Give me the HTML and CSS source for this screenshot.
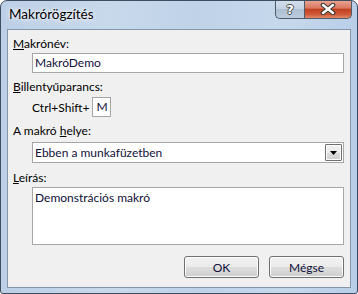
FILE: index.html
```html
<!DOCTYPE html>
<html lang="hu">
<head>
    <meta charset="UTF-8">
    <title>Makrórögzítés</title>
    <link rel="stylesheet" href="styles.css">
</head>
<body>
    <div class="window">
        <div class="titlebar">
            <span class="title">Makrórögzítés</span>
            <div class="caption-buttons">
                <div class="cap-btn help">?</div>
                <div class="cap-btn close">
                    <svg width="16" height="12" viewBox="0 0 16 12">
                        <path d="M3 2 L13 10 M13 2 L3 10" stroke="#3a3a3a" stroke-width="4.6" stroke-linecap="round"/>
                        <path d="M3 2 L13 10 M13 2 L3 10" stroke="#ffffff" stroke-width="2.4" stroke-linecap="round"/>
                    </svg>
                </div>
            </div>
        </div>
        <div class="client">
            <div class="label lbl-name"><u>M</u>akrónév:</div>
            <div class="field textbox">MakróDemo</div>

            <div class="label lbl-key"><u>B</u>illentyűparancs:</div>
            <div class="shortcut">
                <span>Ctrl+Shift+</span>
                <div class="field keybox">M</div>
            </div>

            <div class="label lbl-place">A makró <u>h</u>elye:</div>
            <div class="field combo">
                <span>Ebben a munkafüzetben</span>
                <div class="combo-btn">
                    <svg width="7" height="4" viewBox="0 0 7 4"><path d="M0 0 H7 L3.5 4 Z" fill="#000"/></svg>
                </div>
            </div>

            <div class="label lbl-desc"><u>L</u>eírás:</div>
            <div class="field memo">Demonstrációs makró</div>

            <div class="buttons">
                <div class="btn">OK</div>
                <div class="btn">Mégse</div>
            </div>
        </div>
    </div>
</body>
</html>
```

FILE: styles.css
```css
body, html {
    margin: 0;
    background-color: #ffffff;
}
.window {
    width: 358px;
    height: 294px;
    box-sizing: border-box;
    border: 1px solid #3e4c5e;
    border-radius: 7px 7px 3px 3px;
    background: linear-gradient(90deg, #bccfe6 0%, #c9d9ec 30%, #bfd2e8 55%, #c6d8ec 80%, #b8cee8 100%);
    padding: 0 6px 5px 6px;
    display: flex;
    flex-direction: column;
    font-family: Lato, "Noto Sans", sans-serif;
    font-size: 12px;
    color: #000000;
    overflow: hidden;
}
.titlebar {
    height: 28px;
    display: flex;
    justify-content: space-between;
    align-items: flex-start;
    flex: none;
}
.title {
    margin: 5px 0 0 2px;
    font-size: 13.5px;
    line-height: 17px;
    text-shadow: 0 0 6px #ffffff, 0 0 3px #ffffff;
}
.caption-buttons {
    display: flex;
    margin-top: -1px;
    margin-right: -1px;
}
.cap-btn {
    height: 19px;
    box-sizing: border-box;
    border: 1px solid #4f5b6b;
    border-top: none;
    display: flex;
    align-items: center;
    justify-content: center;
}
.help {
    width: 29px;
    border-right: none;
    border-radius: 0 0 0 5px;
    background: linear-gradient(#d4dfec 0%, #c4d2e2 50%, #aebfd3 52%, #bccbdd 100%);
    color: #ffffff;
    font-family: "DejaVu Sans", sans-serif;
    font-weight: bold;
    font-size: 13px;
    text-shadow: 1px 0 #4a4a4a, -1px 0 #4a4a4a, 0 1px #4a4a4a, 0 -1px #4a4a4a;
}
.close {
    width: 48px;
    border-radius: 0 0 5px 0;
    background: linear-gradient(#e9a99a 0%, #d9775f 45%, #c1401f 52%, #cf5a3a 80%, #e28a66 100%);
}
.client {
    flex: 1;
    border: 1px solid #8596ab;
    background-color: #f0f0f0;
    padding: 0 6px 0 5px;
    display: flex;
    flex-direction: column;
}
.label {
    line-height: 15px;
}
.lbl-name { margin-top: 6px; }
.lbl-key { margin-top: 6px; }
.lbl-place { margin-top: 6px; }
.lbl-desc { margin-top: 7px; }
.field {
    box-sizing: border-box;
    background-color: #ffffff;
    border: 1px solid #a6a6a6;
    color: #10103a;
    line-height: 16px;
    padding: 1px 2px;
}
.textbox {
    margin: 2px 0 0 19px;
    height: 20px;
}
.shortcut {
    margin: 3px 0 0 19px;
    display: flex;
    align-items: center;
    gap: 3px;
    height: 20px;
}
.keybox {
    width: 19px;
    height: 20px;
    padding: 1px 3px;
}
.combo {
    margin: 4px 0 0 19px;
    height: 21px;
    display: flex;
    align-items: center;
    justify-content: space-between;
    padding: 0 1px 0 2px;
}
.combo-btn {
    width: 17px;
    height: 17px;
    box-sizing: border-box;
    border: 1px solid #707070;
    border-radius: 1px;
    background: linear-gradient(#f2f2f2 0%, #ebebeb 50%, #dddddd 51%, #cfcfcf 100%);
    box-shadow: inset 0 0 0 1px #fcfcfc;
    display: flex;
    align-items: center;
    justify-content: center;
}
.memo {
    margin: 2px 0 0 19px;
    height: 58px;
    padding: 2px 2px;
}
.buttons {
    margin-top: 11px;
    display: flex;
    justify-content: flex-end;
    gap: 10px;
}
.btn {
    width: 75px;
    height: 22px;
    box-sizing: border-box;
    border: 1px solid #707070;
    border-radius: 3px;
    background: linear-gradient(#f2f2f2 0%, #ebebeb 50%, #dddddd 51%, #cfcfcf 100%);
    box-shadow: inset 0 0 0 1px #fcfcfc;
    display: flex;
    align-items: center;
    justify-content: center;
    color: #10103a;
}
```
